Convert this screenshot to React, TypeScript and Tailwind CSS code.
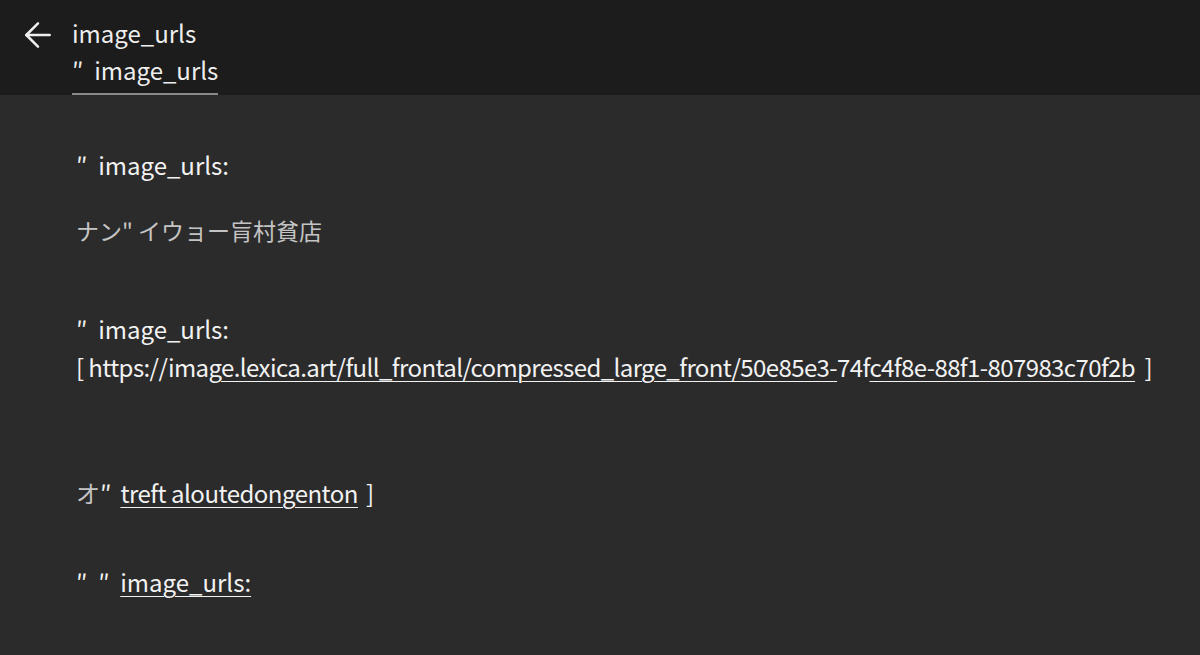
import { ArrowLeft } from "lucide-react";

const font = { fontFamily: '"Noto Sans CJK JP", "Noto Sans", sans-serif' };

function Header() {
    return (
        <header className="flex h-[95px] items-start bg-[#1c1c1c] pl-[18px] pt-[14px]">
            <ArrowLeft className="mt-[1px] h-[40px] w-[40px] text-[#eeeeee]" strokeWidth={1.5} />
            <div className="ml-[14px] flex flex-col items-start">
                <span className="text-[24px] leading-[38px] text-[#eeeeee]">image_urls</span>
                <span className="border-b-2 border-[#8a8a8a] pb-[5px] text-[24px] leading-[36px] text-[#eeeeee]">
                    ″&nbsp; image_urls
                </span>
            </div>
        </header>
    )
}

export default function App() {
    return (
        <div style={font} className="flex h-[655px] w-[1200px] flex-col overflow-hidden bg-[#2b2b2b]">
            <Header />
            <main className="flex flex-col pl-[76px] pt-[50px] text-[24px] text-[#f2f2f2]">
                <p className="leading-[40px]">″&nbsp; image_urls:</p>
                <p className="mt-[28px] text-[23px] leading-[34px] text-[#c4c4c4]">ナン" イウョー肓村貧店</p>
                <p className="mt-[63px] leading-[38px]">″&nbsp; image_urls:</p>
                <p className="whitespace-nowrap tracking-[-0.6px] leading-[38px]">
                    [ https://imag
                    <span className="underline decoration-1 underline-offset-4">e.lexica.art/full_frontal/compressed_large_front/50e85e3-</span>
                    74f
                    <span className="underline decoration-1 underline-offset-4">c4f8e-88f1-807983c70f2b</span>
                    {"  "}&nbsp;]
                </p>
                <p className="mt-[87px] leading-[40px]">
                    <span className="text-[#c4c4c4]">オ</span>″
                    <span className="ml-[9px] tracking-[-0.5px] underline decoration-1 underline-offset-4">treft aloutedongenton</span>
                    <span className="ml-[8px]">]</span>
                </p>
                <p className="mt-[49px] leading-[40px]">
                    ″&nbsp; ″&nbsp; <span className="underline decoration-1 underline-offset-4">image_urls:</span>
                </p>
            </main>
        </div>
    )
}
